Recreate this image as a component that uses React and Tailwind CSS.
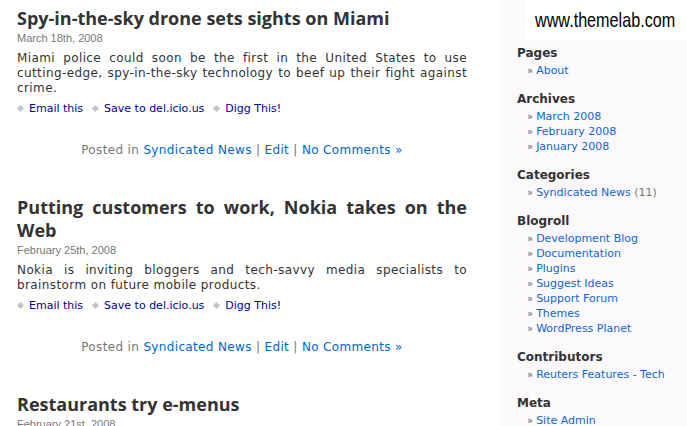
const posts = [
  {
    title: 'Spy-in-the-sky drone sets sights on Miami',
    date: 'March 18th, 2008',
    body: 'Miami police could soon be the first in the United States to use cutting-edge, spy-in-the-sky technology to beef up their fight against crime.',
  },
  {
    title: 'Putting customers to work, Nokia takes on the Web',
    date: 'February 25th, 2008',
    body: 'Nokia is inviting bloggers and tech-savvy media specialists to brainstorm on future mobile products.',
  },
  {
    title: 'Restaurants try e-menus',
    date: 'February 21st, 2008',
    body: 'Diners at a handful of restaurants can now order from touchscreen menus.',
  },
];

const sidebar = [
  { title: 'Pages', items: ['About'] },
  { title: 'Archives', items: ['March 2008', 'February 2008', 'January 2008'] },
  { title: 'Categories', items: ['Syndicated News'], count: '(11)' },
  {
    title: 'Blogroll',
    items: ['Development Blog', 'Documentation', 'Plugins', 'Suggest Ideas', 'Support Forum', 'Themes', 'WordPress Planet'],
  },
  { title: 'Contributors', items: ['Reuters Features - Tech'] },
  { title: 'Meta', items: ['Site Admin', 'Log out'] },
];

function Diamond() {
  return <span className="inline-block w-[5px] h-[5px] bg-[#c4c4c4] rotate-45 mr-[6px] mb-[1px]" />;
}

function Post({ post }) {
  return (
    <div className="mb-[38px]">
      <h2
        className="text-[18px] leading-[23px] font-bold text-[#333] text-justify"
        style={{ fontFamily: '"Open Sans", sans-serif' }}
      >
        {post.title}
      </h2>
      <div className="mt-[1px] text-[11px] leading-[15px] text-[#777] font-['Liberation_Sans',Arial,sans-serif]">
        {post.date}
      </div>
      <p className="mt-[5px] text-[12px] leading-[15px] tracking-[0.4px] text-[#333] text-justify">{post.body}</p>
      <div className="mt-[5px] flex items-center gap-[10px] text-[11px] leading-[15px] text-[#000099] pl-[1px]">
        <span className="flex items-center"><Diamond />Email this</span>
        <span className="flex items-center"><Diamond />Save to del.icio.us</span>
        <span className="flex items-center"><Diamond />Digg This!</span>
      </div>
      <div className="mt-[27px] text-center text-[12px] leading-[15px] tracking-[0.35px] text-[#777]">
        Posted in <span className="text-[#0066cc]">Syndicated News</span> |{' '}
        <span className="text-[#0066cc]">Edit</span> |{' '}
        <span className="text-[#0066cc]">No Comments »</span>
      </div>
    </div>
  );
}

export default function App() {
  return (
    <div className="w-[687px] h-[426px] overflow-hidden flex bg-white font-['DejaVu_Sans',Verdana,sans-serif]">
      {/* Main column */}
      <div className="w-[500px] shrink-0 pl-[17px] pr-[33px] pt-[7px]">
        {posts.map((p) => (
          <Post key={p.title} post={p} />
        ))}
      </div>

      {/* Sidebar */}
      <div className="flex-1 bg-[#fcf9fc]">
        <div className="ml-[25px] h-[40px] bg-white flex items-center pl-[10px] overflow-hidden">
          <span className="inline-block origin-left scale-x-[0.77] whitespace-nowrap text-[21px] leading-[24px] text-black font-['Liberation_Sans',Arial,sans-serif]">
            www.themelab.com
          </span>
        </div>
        <div className="pl-[17px] pt-[4px]">
          {sidebar.map((s) => (
            <div key={s.title} className="mb-[12px]">
              <h3 className="text-[12px] leading-[18px] font-bold text-[#333]">{s.title}</h3>
              <ul className="mt-[1px] pl-[10px]">
                {s.items.map((it) => (
                  <li key={it} className="text-[11px] leading-[15px] text-[#1166cc] whitespace-nowrap">
                    <span className="text-[#666] text-[10px] mr-[3px]">»</span>
                    {it}
                    {s.count && <span className="text-[#777]"> {s.count}</span>}
                  </li>
                ))}
              </ul>
            </div>
          ))}
        </div>
      </div>
    </div>
  );
}
